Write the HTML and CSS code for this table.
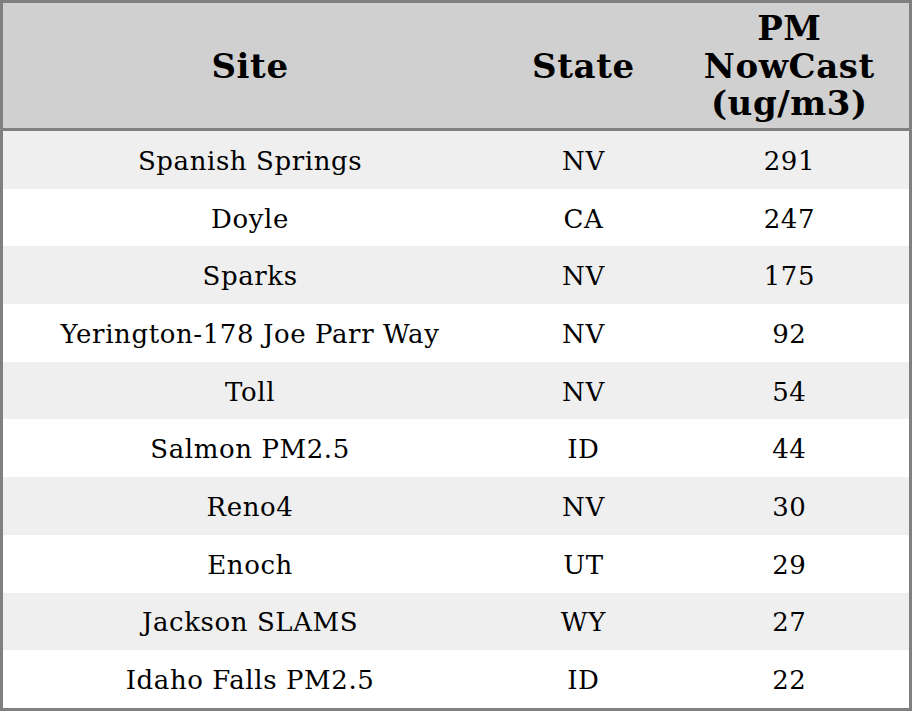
FILE: index.html
```html
<!DOCTYPE html>
<html>
<head>
<meta charset="utf-8">
<link rel="stylesheet" href="styles.css">
</head>
<body>
<table class="aq">
  <colgroup>
    <col class="c-site">
    <col class="c-state">
    <col class="c-pm">
  </colgroup>
  <thead>
    <tr><th>Site</th><th>State</th><th>PM<br>NowCast<br>(ug/m3)</th></tr>
  </thead>
  <tbody>
    <tr><td>Spanish Springs</td><td>NV</td><td>291</td></tr>
    <tr><td>Doyle</td><td>CA</td><td>247</td></tr>
    <tr><td>Sparks</td><td>NV</td><td>175</td></tr>
    <tr><td>Yerington-178 Joe Parr Way</td><td>NV</td><td>92</td></tr>
    <tr><td>Toll</td><td>NV</td><td>54</td></tr>
    <tr><td>Salmon PM2.5</td><td>ID</td><td>44</td></tr>
    <tr><td>Reno4</td><td>NV</td><td>30</td></tr>
    <tr><td>Enoch</td><td>UT</td><td>29</td></tr>
    <tr><td>Jackson SLAMS</td><td>WY</td><td>27</td></tr>
    <tr><td>Idaho Falls PM2.5</td><td>ID</td><td>22</td></tr>
  </tbody>
</table>
</body>
</html>
```
FILE: styles.css
```css
html, body {
  margin: 0;
  padding: 0;
  background: #ffffff;
}
.aq {
  width: 912px;
  border-collapse: collapse;
  border: 3px solid #808080;
  font-family: "DejaVu Serif", serif;
  color: #000;
  table-layout: fixed;
}
.c-site { width: 494px; }
.c-state { width: 172px; }
.c-pm { width: 240px; }
.aq th {
  background: #d0d0d0;
  font-size: 34px;
  font-weight: bold;
  letter-spacing: 0.6px;
  line-height: 37.5px;
  height: 123px;
  padding: 2px 0 0 0;
  text-align: center;
  vertical-align: middle;
  border-bottom: 3px solid #808080;
}
.aq td {
  font-size: 26px;
  letter-spacing: 0.6px;
  height: 55.7px;
  padding: 2px 0 0 0;
  text-align: center;
  vertical-align: middle;
}
.aq tbody tr:nth-child(odd) { background: #efefef; }
.aq tbody tr:nth-child(even) { background: #ffffff; }
```
